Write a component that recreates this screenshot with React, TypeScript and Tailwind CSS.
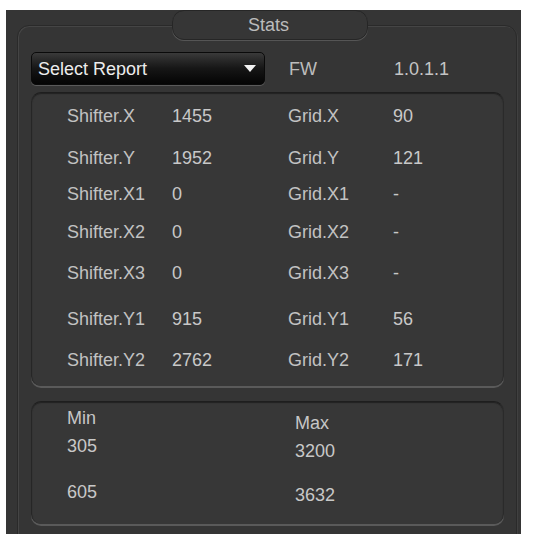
import React from "react";

const font = { fontFamily: '"Liberation Sans", Arial, sans-serif' };

const rows: { l: string; v: string; gl: string; gv: string; mt: string }[] = [
  { l: "Shifter.X", v: "1455", gl: "Grid.X", gv: "90", mt: "mt-[10px]" },
  { l: "Shifter.Y", v: "1952", gl: "Grid.Y", gv: "121", mt: "mt-[18px]" },
  { l: "Shifter.X1", v: "0", gl: "Grid.X1", gv: "-", mt: "mt-[12px]" },
  { l: "Shifter.X2", v: "0", gl: "Grid.X2", gv: "-", mt: "mt-[14px]" },
  { l: "Shifter.X3", v: "0", gl: "Grid.X3", gv: "-", mt: "mt-[17px]" },
  { l: "Shifter.Y1", v: "915", gl: "Grid.Y1", gv: "56", mt: "mt-[22px]" },
  { l: "Shifter.Y2", v: "2762", gl: "Grid.Y2", gv: "171", mt: "mt-[17px]" },
];

export default function App() {
  return (
    <div className="w-[537px] h-[542px] bg-white pt-[10px] pl-[6px]" style={font}>
      <div className="relative w-[515px] h-[524px] bg-[#353535] overflow-hidden">
        {/* group frame */}
        <div className="mt-[15px] ml-[11px] w-[500px] h-[540px] rounded-[12px] border border-[#2a2a2a] shadow-[inset_1px_1px_0_#454545,1px_1px_0_#404040] pt-[26px] pl-[13px]">
          {/* header row */}
          <div className="flex items-center h-[33px]">
            <div className="w-[234px] h-[33px] rounded-[5px] border border-[#0a0a0a] bg-gradient-to-b from-[#3a3a3a] via-[#161616] to-[#050505] shadow-[0_1px_0_#5a5a5a] flex items-center justify-between pl-[6px] pr-[8px]">
              <span className="text-[18px] text-[#ececec] leading-none">Select Report</span>
              <svg width="12" height="7" viewBox="0 0 12 7">
                <path d="M0 0 L12 0 L6 7 Z" fill="#f2f2f2" />
              </svg>
            </div>
            <span className="ml-[24px] w-[105px] text-[18px] text-[#bcbcbc] leading-none">FW</span>
            <span className="text-[18px] text-[#c4c4c4] leading-none">1.0.1.1</span>
          </div>

          {/* stats panel */}
          <div className="mt-[7px] w-[473px] h-[294px] rounded-[10px] bg-[#373737] border-t border-t-[#1e1e1e] border-l border-l-[#262626] border-r border-r-[#2a2a2a] shadow-[0_2px_0_#5a5a5a,inset_0_1px_1px_#222] pl-[35px] pt-[1px]">
            {rows.map((r) => (
              <div key={r.l} className={`flex items-center h-[24px] text-[18px] leading-none ${r.mt}`}>
                <span className="w-[105px] text-[#c2c2c2]">{r.l}</span>
                <span className="w-[116px] text-[#c8c8c8]">{r.v}</span>
                <span className="w-[105px] text-[#c2c2c2]">{r.gl}</span>
                <span className="text-[#c8c8c8]">{r.gv}</span>
              </div>
            ))}
          </div>

          {/* min / max panel */}
          <div className="mt-[15px] w-[473px] h-[123px] rounded-[10px] bg-[#373737] border-t border-t-[#1e1e1e] border-l border-l-[#262626] border-r border-r-[#2a2a2a] shadow-[0_2px_0_#5a5a5a,inset_0_1px_1px_#222] pl-[35px] flex text-[18px] leading-none">
            <div className="w-[228px] flex flex-col">
              <span className="mt-[7px] text-[#c6c6c6]">Min</span>
              <span className="mt-[10px] text-[#c8c8c8]">305</span>
              <span className="mt-[28px] text-[#c8c8c8]">605</span>
            </div>
            <div className="flex flex-col">
              <span className="mt-[12px] text-[#c6c6c6]">Max</span>
              <span className="mt-[10px] text-[#c8c8c8]">3200</span>
              <span className="mt-[26px] text-[#c8c8c8]">3632</span>
            </div>
          </div>
        </div>

        {/* Stats tab over the frame top */}
        <div className="absolute left-[166px] top-0 w-[196px] h-[30px] rounded-[12px] bg-[#363636] border border-[#262626] shadow-[0_1px_0_#555555] flex items-center justify-center pr-[3px]">
          <span className="text-[18px] text-[#bcbcbc] leading-none">Stats</span>
        </div>
      </div>
    </div>
  );
}
